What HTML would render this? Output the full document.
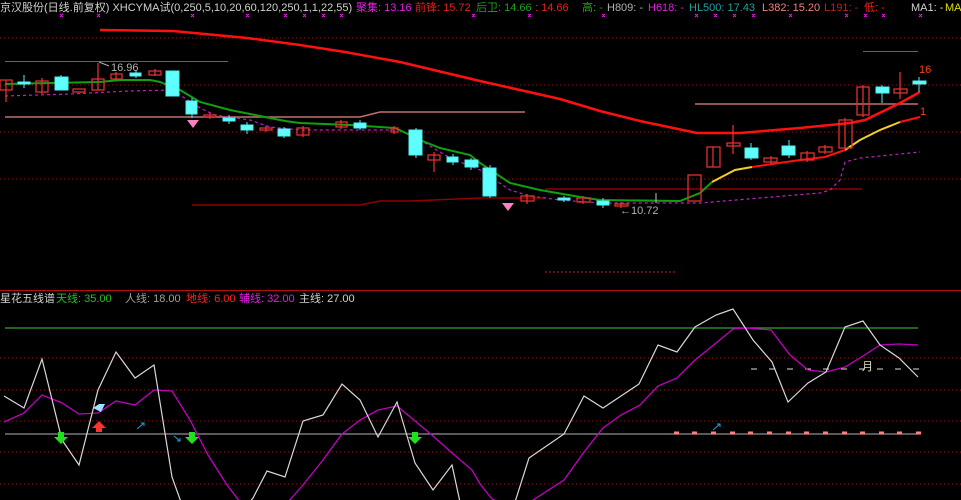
<!DOCTYPE html>
<html><head><meta charset="utf-8"><style>
html,body{margin:0;padding:0;background:#000;width:961px;height:500px;overflow:hidden}
svg{display:block}
text{font-family:"Liberation Sans","Noto Sans CJK SC",sans-serif;font-size:11px}
</style></head><body>
<svg width="961" height="500" viewBox="0 0 961 500" xmlns="http://www.w3.org/2000/svg">
<rect width="961" height="500" fill="#000"/>
<!-- top header -->
<text x="0" y="11" fill="#d0d0d0">京汉股份(日线.前复权) XHCYMA试(0,250,5,10,20,60,120,250,1,1,22,55)</text>
<text x="356" y="11" fill="#e020e0">聚集: 13.16</text>
<text x="415" y="11" fill="#e02020">前锋: 15.72</text>
<text x="476" y="11" fill="#20a020">后卫: 14.66</text>
<text x="535" y="11" fill="#e02020">: 14.66</text>
<text x="582" y="11" fill="#20a020">高: -</text>
<text x="607" y="11" fill="#b0b0b0">H809: -</text>
<text x="648" y="11" fill="#e020e0">H618: -</text>
<text x="689" y="11" fill="#20a0a0">HL500: 17.43</text>
<text x="762" y="11" fill="#f08080">L382: 15.20</text>
<text x="824" y="11" fill="#c02020">L191: -</text>
<text x="864" y="11" fill="#e02020">低: -</text>
<text x="911" y="11" fill="#d0d0d0">MA1: -</text>
<text x="945" y="11" fill="#e0e000">MA</text>
<g stroke="#e020e0" stroke-width="1">
<path d="M60,14l3,3m0,-3l-3,3M97,14l3,3m0,-3l-3,3M191,14l3,3m0,-3l-3,3M246,14l3,3m0,-3l-3,3M284,14l3,3m0,-3l-3,3M303,14l3,3m0,-3l-3,3M322,14l3,3m0,-3l-3,3M340,14l3,3m0,-3l-3,3M472,14l3,3m0,-3l-3,3M528,14l3,3m0,-3l-3,3M602,14l3,3m0,-3l-3,3M695,14l3,3m0,-3l-3,3M714,14l3,3m0,-3l-3,3M733,14l3,3m0,-3l-3,3M752,14l3,3m0,-3l-3,3M789,14l3,3m0,-3l-3,3M845,14l3,3m0,-3l-3,3M864,14l3,3m0,-3l-3,3M882,14l3,3m0,-3l-3,3M919,14l3,3m0,-3l-3,3"/>
</g>
<!-- grid dotted main -->
<g stroke="#a01010" stroke-width="1" stroke-dasharray="1,3">
<path d="M0,38H961M0,85H961M0,132H961M0,179H961"/>
<path d="M0,358H961M0,390H961M0,421H961M0,452H961M0,484H961"/>
</g>
<path d="M545,272H675" stroke="#c02020" stroke-dasharray="2,2"/>
<path d="M0,290.5H961" stroke="#b01010"/>
<!-- horizontal levels -->
<path d="M5,61.5H228M863,51.5H918" stroke="#208080"/>
<path d="M5,117H360L380,112H525M695,104H918" stroke="#c07070" stroke-width="1.5" fill="none"/>
<path d="M192,205H360L380,201H410L480,198H545M545,189H862" stroke="#900000" stroke-width="1.5" fill="none"/>
<!-- MA lines -->
<polyline fill="none" stroke="#ff1010" stroke-width="2.5" points="100,30 173,31 247,38 300,45 345,52 400,62 480,81 560,99 600,111 640,121 697,133 740,133 800,128 850,123 865,120 900,103 920,92"/>
<polyline fill="none" stroke="#c020c0" stroke-width="1.2" stroke-dasharray="3,3" points="5,96 70,94 130,91 175,90 180,95 200,108 215,115 250,120 270,127 300,130 400,130 420,140 450,158 480,170 510,190 530,196 560,200 600,203 700,203 760,198 820,193 830,190 840,180 845,162 860,158 920,152"/>
<polyline fill="none" stroke="#10a010" stroke-width="2" points="5,84 50,83 100,82 120,80 150,80 160,82 180,90 200,102 230,110 250,114 285,121 300,123 350,125 380,127 395,128 410,135 420,140 440,148 470,155 480,163 510,183 540,190 580,197 600,200 680,201 700,193 712,182"/>
<polyline fill="none" stroke="#f0d020" stroke-width="2" points="712,182 735,170 752,167"/>
<polyline fill="none" stroke="#ff1010" stroke-width="2" points="752,167 800,160 825,157 845,150"/>
<polyline fill="none" stroke="#f0d020" stroke-width="2" points="845,150 860,140 880,130 900,122"/>
<polyline fill="none" stroke="#ff1010" stroke-width="2" points="900,122 920,117"/>
<!-- candles -->
<g stroke="#e03030" fill="none" stroke-width="1.3">
<path d="M6,80V102M42,78V94M98,63V90M116,72V80M155,69V76M210,113V119M266,126V132M303,126V137M341,120V129M394,126V134M434,152V172M527,194V204M583,196V204M621,202V208M713,147V167M733,125V154M771,156V164M807,151V162M825,145V154M845,118V150M863,85V117M900,72V99"/>
<rect x="0" y="80" width="12" height="10"/><rect x="36" y="81" width="12" height="11"/><rect x="73" y="89" width="12" height="3"/><rect x="92" y="79" width="12" height="11"/><rect x="111" y="74" width="11" height="5"/><rect x="149" y="71" width="12" height="4"/><rect x="204" y="115" width="12" height="2"/><rect x="260" y="128" width="12" height="2"/><rect x="297" y="128" width="12" height="7"/><rect x="336" y="122" width="11" height="5"/><rect x="391" y="128" width="7" height="4"/><rect x="428" y="155" width="12" height="5"/><rect x="521" y="196" width="13" height="5"/><rect x="577" y="198" width="13" height="4"/><rect x="615" y="204" width="13" height="2"/><rect x="688" y="175" width="13" height="26"/><rect x="707" y="147" width="13" height="20"/><rect x="727" y="143" width="13" height="3"/><rect x="764" y="158" width="13" height="4"/><rect x="801" y="153" width="13" height="7"/><rect x="819" y="147" width="13" height="5"/><rect x="839" y="120" width="13" height="28"/><rect x="857" y="87" width="12" height="28"/><rect x="894" y="89" width="13" height="4"/>
</g>
<g stroke="#50f0f0" fill="#60ffff" stroke-width="1">
<path d="M24,75V88M61,75V90M136,70V78M192,98V118M229,115V124M247,122V134M284,127V138M360,120V130M416,128V158M453,154V165M471,158V170M490,165V198M564,196V202M603,198V208M751,143V160M789,140V158M882,85V103M919,77V92" fill="none"/>
<rect x="18" y="82" width="12" height="2"/><rect x="55" y="77" width="13" height="13"/><rect x="130" y="73" width="11" height="3"/><rect x="166" y="71" width="13" height="25"/><rect x="186" y="101" width="11" height="13"/><rect x="223" y="118" width="12" height="3"/><rect x="241" y="125" width="12" height="5"/><rect x="278" y="129" width="12" height="7"/><rect x="354" y="123" width="12" height="5"/><rect x="409" y="130" width="13" height="25"/><rect x="447" y="157" width="11" height="5"/><rect x="465" y="160" width="13" height="7"/><rect x="483" y="168" width="13" height="28"/><rect x="558" y="198" width="12" height="2"/><rect x="597" y="201" width="12" height="4"/><rect x="745" y="148" width="13" height="10"/><rect x="782" y="146" width="13" height="9"/><rect x="876" y="87" width="13" height="6"/><rect x="913" y="81" width="13" height="3"/>
</g>
<path d="M656,193V203" stroke="#c0c0c0"/>
<!-- gems -->
<path d="M187,120h12l-6,8z" fill="#ff80c0"/><path d="M502,203h12l-6,8z" fill="#ff80c0"/>
<!-- labels -->
<path d="M99,62l10,4" stroke="#b0b0b0"/>
<text x="111" y="71" fill="#b0b0b0">16.96</text>
<text x="620" y="214" fill="#b0b0b0">←10.72</text>
<text x="919" y="73" fill="#ff4010" font-size="12">16</text>
<text x="920" y="115" fill="#ff4010" font-size="12">1</text>
<!-- lower panel -->
<text x="0" y="302" fill="#d0d0d0">星花五线谱</text>
<text x="56" y="302" fill="#20c020">天线: 35.00</text>
<text x="125" y="302" fill="#a0a0a0">人线: 18.00</text>
<text x="186" y="302" fill="#ff2020">地线: 6.00</text>
<text x="239" y="302" fill="#e020e0">辅线: 32.00</text>
<text x="299" y="302" fill="#d0d0d0">主线: 27.00</text>
<path d="M5,328H918" stroke="#30a030" stroke-width="1.2"/>
<path d="M5,434H918" stroke="#909090" stroke-width="1.2"/>
<path d="M674,433h5M692,433h5M711,433h5M730,433h5M748,433h5M767,433h5M786,433h5M804,433h5M823,433h5M842,433h5M860,433h5M879,433h5M897,433h5M916,433h5" stroke="#ff8080" stroke-width="3"/>
<path d="M751,369H925" stroke="#e0e0c0" stroke-dasharray="6,12"/>
<text x="862" y="370" fill="#e0e0c0" font-size="12">月</text>
<polyline fill="none" stroke="#c000c0" stroke-width="1.3" points="4,422 24,413 42,395 62,403 79,414 98,413 116,401 135,405 154,390 172,391 190,420 208,455 227,485 240,502"/>
<polyline fill="none" stroke="#c000c0" stroke-width="1.3" points="288,502 303,485 323,460 342,434 360,420 378,410 397,406 415,421 433,436 452,453 472,470 480,484 492,499 500,502"/>
<polyline fill="none" stroke="#c000c0" stroke-width="1.3" points="530,502 564,480 584,452 603,428 621,415 640,405 658,386 677,378 695,360 716,343 733,329 746,328 771,330 790,355 808,370 826,372 845,367 863,356 880,345 899,344 918,345"/>
<polyline fill="none" stroke="#d8d8d8" stroke-width="1.2" points="4,396 24,408 42,359 62,440 79,465 98,390 116,352 135,378 154,365 172,477 181,502"/>
<polyline fill="none" stroke="#d8d8d8" stroke-width="1.2" points="250,502 253,498 267,471 285,477 303,421 323,415 342,384 360,400 378,437 397,402 415,463 433,490 452,465 460,502"/>
<polyline fill="none" stroke="#d8d8d8" stroke-width="1.2" points="515,502 529,458 564,434 584,396 603,408 621,396 639,384 658,345 677,352 695,327 716,315 733,309 753,340 772,362 788,402 808,383 826,372 845,327 863,321 880,345 899,358 918,377"/>
<!-- arrows -->
<g fill="#20e020"><path d="M58,432h6v5h4l-7,7l-7,-7h4z"/><path d="M189,432h6v5h4l-7,7l-7,-7h4z"/><path d="M412,432h6v5h4l-7,7l-7,-7h4z"/></g>
<path d="M96,432h6v-4h4l-7,-7l-7,7h4z" fill="#ff3030"/>
<path d="M93,408l6,-4h6l-4,8z" fill="#a0e0ff"/>
<g stroke="#20a0e0" fill="none"><path d="M137,429l7,-6m-3,0h3v3M174,436l6,5m0,-3v3h-3M713,430l7,-6m-3,0h3v3"/></g>
</svg>
</body></html>
